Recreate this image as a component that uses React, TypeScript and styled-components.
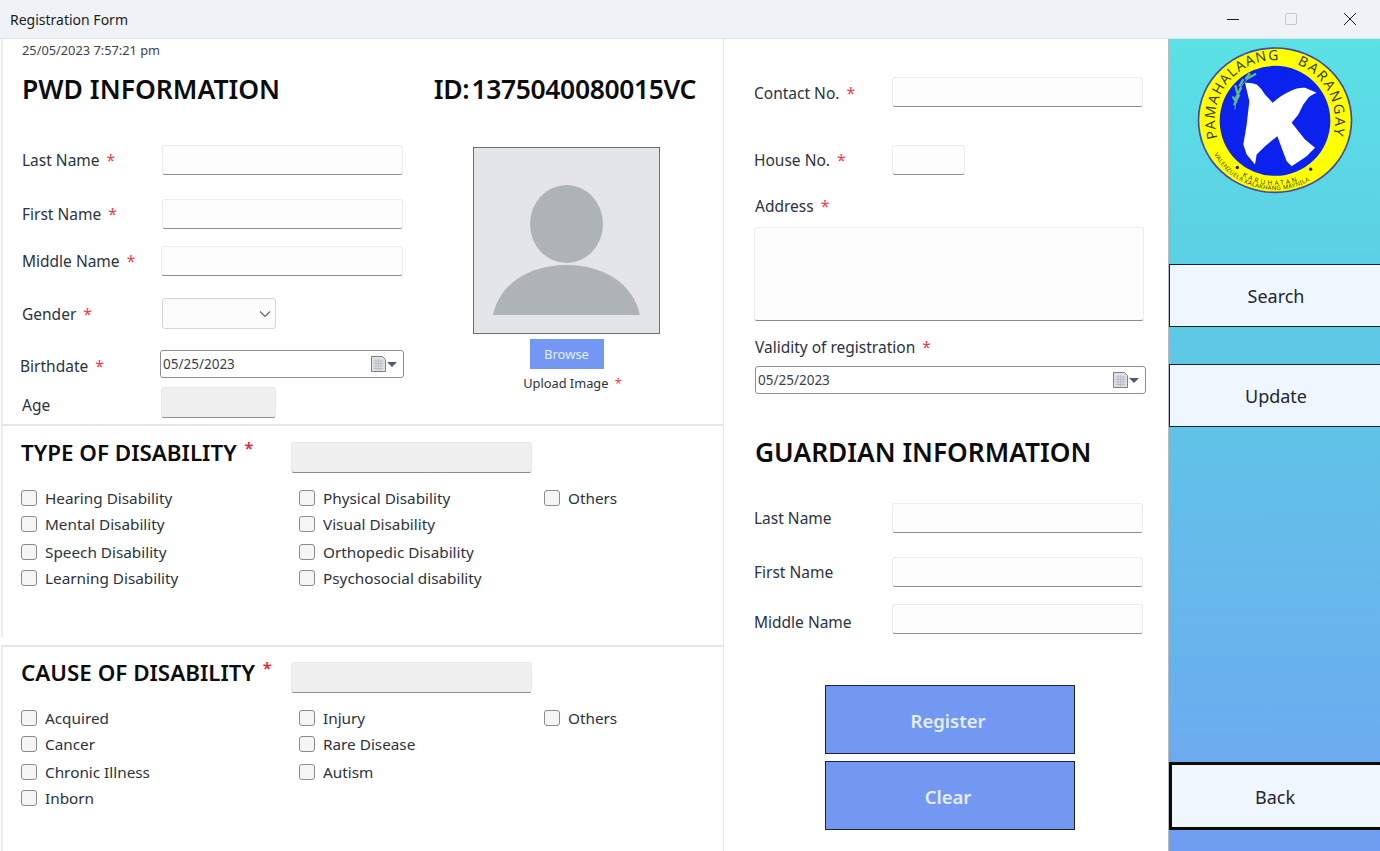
import React from 'react';
import styled, { createGlobalStyle } from 'styled-components';

const GlobalStyle = createGlobalStyle`
  html, body {
    margin: 0;
    padding: 0;
    background: #ffffff;
  }
  body {
    font-family: 'Noto Sans', 'Open Sans', sans-serif;
    color: #2a2f38;
    overflow: hidden;
  }
  * {
    box-sizing: border-box;
  }
`;

const typeOptions = [
  ['Hearing Disability', 'Mental Disability', 'Speech Disability', 'Learning Disability'],
  ['Physical Disability', 'Visual Disability', 'Orthopedic Disability', 'Psychosocial disability'],
  ['Others'],
];

const causeOptions = [
  ['Acquired', 'Cancer', 'Chronic Illness', 'Inborn'],
  ['Injury', 'Rare Disease', 'Autism'],
  ['Others'],
];

const CalendarIcon = () => (
  <CalendarSvg width="28" height="18" viewBox="0 0 28 18">
    <path d="M1.500 1.500h11l3 3v12h-14z" fill="#dfe1e6" stroke="#7f8086" />
    <path d="M3.500 6h10M3.500 8.500h10M3.500 11h10M3.500 13.500h10M6 4.500v11M8.500 4.500v11M11 4.500v11" stroke="#b3b8c4" strokeWidth="0.8" />
    <path d="M17 7h10l-5 5z" fill="#4e5c7d" />
  </CalendarSvg>
);

const Logo = () => (
  <svg width="160" height="152" viewBox="105 135 480 455">
    <defs>
      <path id="arcTop" d="M173 416 A180 180 0 1 1 517 416" />
      <path id="arcKaru" d="M232 522 A194 194 0 0 0 458 522" />
      <path id="arcValen" d="M160 462 A210 210 0 0 0 510 492" />
    </defs>
    <ellipse cx="345" cy="363" rx="232" ry="219" fill="#3f4aa8" />
    <ellipse cx="345" cy="363" rx="227" ry="214" fill="#ffff00" />
    <ellipse cx="345" cy="365" rx="166" ry="165" fill="#0b22ee" />
    <path
      d="M255 251 Q275 250 290 256 Q305 268 315 286 L338 311 Q362 288 390 276 Q415 264 435 266 L470 281 Q452 288 445 296 L430 316 L415 346 L395 371 L435 421 L465 446 L440 471 L395 501 L380 486 L352 411 L315 441 L290 466 L285 496 L260 466 L250 436 L260 376 L268 306 Z"
      fill="#ffffff"
    />
    <path d="M225 331 Q226 280 252 250 Q268 234 285 226" fill="none" stroke="#5fb98a" strokeWidth="3" />
    <path
      d="M222 318 L238 286 M226 300 L244 264 M232 282 L226 258 M238 262 L250 240 M256 240 L270 222 M262 238 L288 224 M230 312 L218 292"
      fill="none"
      stroke="#5fb98a"
      strokeWidth="7"
    />
    <LogoText $size={42} $spacing={3.500}>
      <textPath href="#arcTop">PAMAHALAANG</textPath>
    </LogoText>
    <LogoText $size={42} $spacing={6}>
      <textPath href="#arcTop" startOffset="60%">BARANGAY</textPath>
    </LogoText>
    <LogoText $size={20} $spacing={7}>
      <textPath href="#arcKaru" startOffset="7%">KARUHATAN</textPath>
    </LogoText>
    <LogoText $size={18} $spacing={1}>
      <textPath href="#arcValen" startOffset="1%">VALENZUELA KALAKHANG MAYNILA</textPath>
    </LogoText>
    <circle cx="232" cy="505" r="5" fill="#222222" />
    <circle cx="452" cy="510" r="5" fill="#222222" />
  </svg>
);

const OptionGrid = ({ columns }: { columns: string[][] }) => (
  <Options>
    {columns.map((items, col) => (
      <OptionColumn key={col}>
        {items.map((item) => (
          <OptionRow key={item}>
            <Checkbox type="checkbox" />
            <span>{item}</span>
          </OptionRow>
        ))}
      </OptionColumn>
    ))}
  </Options>
);

export default function App() {
  return (
    <>
      <GlobalStyle />
      <Window>
        <TitleBar>
          <WindowTitle>Registration Form</WindowTitle>
          <WindowControls>
            <WindowControl>
              <svg width="14" height="14" viewBox="0 0 14 14">
                <path d="M1 7.500h12" stroke="#1a1a1a" strokeWidth="1" />
              </svg>
            </WindowControl>
            <WindowControl>
              <svg width="14" height="14" viewBox="0 0 14 14">
                <rect x="1.500" y="1.500" width="11" height="11" rx="1.500" fill="none" stroke="#c4c6c9" />
              </svg>
            </WindowControl>
            <WindowControl>
              <svg width="14" height="14" viewBox="0 0 14 14">
                <path d="M1 1l12 12M13 1L1 13" stroke="#1a1a1a" strokeWidth="1" />
              </svg>
            </WindowControl>
          </WindowControls>
        </TitleBar>

        <Body>
          <LeftPanel>
            <InfoSection>
              <Timestamp>25/05/2023 7:57:21 pm</Timestamp>
              <HeaderRow>
                <Heading>PWD INFORMATION</Heading>
                <IdHeading>ID: 1375040080015VC</IdHeading>
              </HeaderRow>
              <InfoColumns>
                <FieldColumn>
                  <FieldRow $top={0}>
                    <FieldLabel>Last Name <Req>*</Req></FieldLabel>
                    <TextBox />
                  </FieldRow>
                  <FieldRow $top={24}>
                    <FieldLabel>First Name <Req>*</Req></FieldLabel>
                    <TextBox />
                  </FieldRow>
                  <FieldRow $top={17} $inputShift={-1}>
                    <FieldLabel>Middle Name <Req>*</Req></FieldLabel>
                    <TextBox $width={242} />
                  </FieldRow>
                  <FieldRow $top={22}>
                    <FieldLabel>Gender <Req>*</Req></FieldLabel>
                    <SelectBox>
                      <svg width="12" height="8" viewBox="0 0 12 8">
                        <path d="M1 1.500l5 5 5-5" fill="none" stroke="#60646a" strokeWidth="1.200" />
                      </svg>
                    </SelectBox>
                  </FieldRow>
                  <FieldRow $top={21} $rowShift={-2}>
                    <FieldLabel $drop={4}>Birthdate <Req>*</Req></FieldLabel>
                    <DateBox $width={244}>
                      05/25/2023
                      <CalendarIcon />
                    </DateBox>
                  </FieldRow>
                  <FieldRow $top={9} $inputShift={-1}>
                    <FieldLabel $drop={5}>Age</FieldLabel>
                    <ReadOnlyBox $width={115} />
                  </FieldRow>
                </FieldColumn>
                <PhotoColumn>
                  <PhotoFrame>
                    <svg width="185" height="185" viewBox="0 0 185 185">
                      <ellipse cx="92.500" cy="76" rx="36.500" ry="39" fill="#aeb3b7" />
                      <path d="M19 167 C26 135 56 117 92.500 117 C129 117 159 135 166 167 Z" fill="#aeb3b7" />
                    </svg>
                  </PhotoFrame>
                  <BrowseButton>Browse</BrowseButton>
                  <UploadLabel>Upload Image <Req>*</Req></UploadLabel>
                </PhotoColumn>
              </InfoColumns>
            </InfoSection>

            <DisabilitySection $height={213} $pad={16} $after={8}>
              <SectionHeader>
                <SectionTitle>TYPE OF DISABILITY <TitleReq>*</TitleReq></SectionTitle>
                <ReadOnlyBox $width={241} />
              </SectionHeader>
              <OptionGrid columns={typeOptions} />
            </DisabilitySection>

            <DisabilitySection $height={206} $pad={15}>
              <SectionHeader>
                <SectionTitle>CAUSE OF DISABILITY <TitleReq>*</TitleReq></SectionTitle>
                <ReadOnlyBox $width={241} />
              </SectionHeader>
              <OptionGrid columns={causeOptions} />
            </DisabilitySection>
          </LeftPanel>

          <MiddlePanel>
            <InlineField $top={0}>
              <MiddleLabel $drop={2}>Contact No. <Req>*</Req></MiddleLabel>
              <TextBox $width={251} />
            </InlineField>
            <InlineField $top={38}>
              <MiddleLabel>House No. <Req>*</Req></MiddleLabel>
              <TextBox $width={73} />
            </InlineField>
            <StackLabel $top={20}>Address <Req>*</Req></StackLabel>
            <AddressBox />
            <StackLabel $top={15}>Validity of registration <Req>*</Req></StackLabel>
            <MiddleDateBox $width={391} $top={8}>
              05/25/2023
              <CalendarIcon />
            </MiddleDateBox>
            <GuardianHeading>GUARDIAN INFORMATION</GuardianHeading>
            <InlineField $top={32}>
              <MiddleLabel>Last Name</MiddleLabel>
              <TextBox $width={251} />
            </InlineField>
            <InlineField $top={24}>
              <MiddleLabel>First Name</MiddleLabel>
              <TextBox $width={251} />
            </InlineField>
            <InlineField $top={17}>
              <MiddleLabel $drop={6}>Middle Name</MiddleLabel>
              <TextBox $width={251} />
            </InlineField>
            <ActionStack>
              <ActionButton>Register</ActionButton>
              <ActionButton>Clear</ActionButton>
            </ActionStack>
          </MiddlePanel>

          <Sidebar>
            <LogoWrap>
              <Logo />
            </LogoWrap>
            <SideButton $top={70}>Search</SideButton>
            <SideButton $top={37}>Update</SideButton>
            <BackButton>Back</BackButton>
          </Sidebar>
        </Body>
      </Window>
    </>
  );
}

// Styled Components
const Window = styled.div`
  width: 1380px;
  height: 851px;
  display: flex;
  flex-direction: column;
  overflow: hidden;
  background: #ffffff;
`;

const TitleBar = styled.div`
  height: 39px;
  flex-shrink: 0;
  display: flex;
  align-items: center;
  justify-content: space-between;
  padding-left: 10px;
  background: #eff3f8;
  border-bottom: 1px solid #e2e4e6;
`;

const WindowTitle = styled.div`
  font-size: 14px;
  color: #1c1c1c;
`;

const WindowControls = styled.div`
  display: flex;
  padding-right: 1px;
`;

const WindowControl = styled.div`
  width: 58.500px;
  height: 38px;
  display: flex;
  align-items: center;
  justify-content: center;
`;

const Body = styled.div`
  flex: 1;
  display: flex;
  min-height: 0;
`;

const LeftPanel = styled.div`
  width: 724px;
  flex-shrink: 0;
  display: flex;
  flex-direction: column;
  border-right: 1px solid #e4e4e4;
`;

const InfoSection = styled.div`
  height: 385px;
  margin-left: 1px;
  padding-left: 19px;
  flex-shrink: 0;
  border-left: 2px solid #ececec;
`;

const Timestamp = styled.div`
  font-size: 12.800px;
  line-height: 17px;
  padding-top: 3px;
  height: 20px;
  color: #3d4350;
`;

const HeaderRow = styled.div`
  display: flex;
  justify-content: space-between;
  align-items: center;
  height: 60px;
  padding-right: 27px;
`;

const Heading = styled.h1`
  margin: 0;
  font-size: 26.500px;
  font-weight: 600;
  color: #0c0c0e;
`;

const IdHeading = styled(Heading)`
  letter-spacing: -0.400px;
  word-spacing: -4px;
`;

const InfoColumns = styled.div`
  display: flex;
  padding-top: 26px;
`;

const FieldColumn = styled.div`
  width: 451px;
  flex-shrink: 0;
`;

const FieldRow = styled.div<{ $top: number; $inputShift?: number; $rowShift?: number }>`
  display: flex;
  align-items: center;
  margin-top: ${(p) => p.$top}px;
  margin-left: ${(p) => p.$rowShift ?? 0}px;
  & > :last-child {
    margin-left: ${(p) => p.$inputShift ?? 0}px;
  }
`;

const FieldLabel = styled.div<{ $drop?: number }>`
  width: 140px;
  flex-shrink: 0;
  padding-top: ${(p) => p.$drop ?? 0}px;
  font-size: 15.500px;
  color: #2c3240;
`;

const Req = styled.span`
  color: #f5374a;
  margin-left: 3px;
`;

const TitleReq = styled.span`
  color: #f01a2c;
  font-size: 16px;
  vertical-align: 7px;
  margin-left: 2px;
`;

const TextBox = styled.div<{ $width?: number }>`
  width: ${(p) => p.$width ?? 241}px;
  height: 30px;
  flex-shrink: 0;
  background: #fdfdfd;
  border: 1px solid #ececec;
  border-bottom: 1px solid #8e8e8e;
  border-radius: 3px;
`;

const SelectBox = styled.div`
  width: 114px;
  height: 31px;
  display: flex;
  align-items: center;
  justify-content: flex-end;
  padding-right: 4px;
  background: #fcfcfc;
  border: 1px solid #d6d6d6;
  border-radius: 3px;
`;

const DateBox = styled.div<{ $width: number; $top?: number }>`
  width: ${(p) => p.$width}px;
  height: 28px;
  margin-top: ${(p) => p.$top ?? 0}px;
  display: flex;
  align-items: center;
  justify-content: space-between;
  padding: 0 5px 0 2px;
  font-size: 13.500px;
  color: #3a3f4a;
  background: #ffffff;
  border: 1px solid #8f8f8f;
  border-radius: 3px;
`;

const MiddleDateBox = styled(DateBox)`
  margin-left: 1px;
`;

const CalendarSvg = styled.svg`
  flex-shrink: 0;
`;

const ReadOnlyBox = styled.div<{ $width: number }>`
  width: ${(p) => p.$width}px;
  height: 31px;
  background: #f0f0f0;
  border: 1px solid #e8e8e8;
  border-bottom: 1px solid #8e8e8e;
  border-radius: 3px;
`;

const PhotoColumn = styled.div`
  width: 187px;
  display: flex;
  flex-direction: column;
  align-items: center;
  padding-top: 2px;
`;

const PhotoFrame = styled.div`
  width: 187px;
  height: 187px;
  display: flex;
  background: #e3e5e8;
  border: 1px solid #6e6e6e;
`;

const BrowseButton = styled.div`
  width: 74px;
  height: 30px;
  margin-top: 5px;
  display: flex;
  align-items: center;
  justify-content: center;
  font-size: 13px;
  color: #e8efff;
  background: #7298f3;
`;

const UploadLabel = styled.div`
  margin-top: 5px;
  padding-left: 12px;
  font-size: 12.800px;
  white-space: nowrap;
  color: #2c3240;
`;

const DisabilitySection = styled.div<{ $height: number; $pad: number; $after?: number }>`
  height: ${(p) => p.$height}px;
  flex-shrink: 0;
  margin: 0 0 ${(p) => p.$after ?? 0}px 1px;
  padding: ${(p) => p.$pad}px 0 0 18px;
  border-top: 2px solid #e6e6e6;
  border-left: 2px solid #ececec;
`;

const SectionHeader = styled.div`
  display: flex;
  align-items: center;
  height: 31px;
`;

const SectionTitle = styled.h2`
  margin: 0 0 14px;
  width: 270px;
  flex-shrink: 0;
  font-size: 22.400px;
  font-weight: 600;
  line-height: 22px;
  white-space: nowrap;
  color: #0c0c0e;
`;

const Options = styled.div`
  display: grid;
  grid-template-columns: 278px 245px auto;
  margin-top: 12px;
`;

const OptionColumn = styled.div`
  display: grid;
  grid-template-rows: 26px 26px 28px 26px;
  align-items: end;
`;

const OptionRow = styled.label`
  display: flex;
  align-items: center;
  gap: 8px;
  height: 26px;
  font-size: 15.300px;
  color: #2c3240;
`;

const Checkbox = styled.input`
  appearance: none;
  width: 16px;
  height: 16px;
  margin: 0;
  flex-shrink: 0;
  background: #f5f5f5;
  border: 1px solid #8a8a8a;
  border-radius: 3px;
`;

const MiddlePanel = styled.div`
  width: 445px;
  flex-shrink: 0;
  display: flex;
  flex-direction: column;
  padding: 38px 0 0 30px;
  border-right: 1px solid #b8babd;
`;

const InlineField = styled.div<{ $top: number }>`
  display: flex;
  align-items: center;
  margin-top: ${(p) => p.$top}px;
`;

const MiddleLabel = styled.div<{ $drop?: number }>`
  width: 138px;
  flex-shrink: 0;
  padding-top: ${(p) => p.$drop ?? 0}px;
  font-size: 15.500px;
  color: #2c3240;
`;

const StackLabel = styled.div<{ $top: number }>`
  margin-top: ${(p) => p.$top}px;
  padding-left: 1px;
  font-size: 15.500px;
  line-height: 22px;
  color: #2c3240;
`;

const AddressBox = styled.div`
  width: 390px;
  height: 94px;
  margin-top: 10px;
  background: #fdfdfd;
  border: 1px solid #ececec;
  border-bottom: 1px solid #8e8e8e;
  border-radius: 3px;
`;

const GuardianHeading = styled.h2`
  margin: 40px 0 0 1px;
  font-size: 26.300px;
  line-height: 37px;
  font-weight: 600;
  white-space: nowrap;
  color: #0c0c0e;
`;

const ActionStack = styled.div`
  display: flex;
  flex-direction: column;
  gap: 7px;
  margin: 51px 0 0 71px;
`;

const ActionButton = styled.div`
  width: 250px;
  height: 69px;
  display: flex;
  align-items: center;
  justify-content: center;
  padding: 2px 4px 0 0;
  font-size: 18.500px;
  font-weight: 600;
  color: #e6eeff;
  background: #7298f1;
  border: 1px solid #1d2233;
`;

const Sidebar = styled.div`
  flex: 1;
  display: flex;
  flex-direction: column;
  background: linear-gradient(180deg, #5be1e6 0%, #5ccde4 30%, #6aaeee 85%, #6f9df0 100%);
`;

const LogoWrap = styled.div`
  display: flex;
  justify-content: center;
  height: 155px;
  padding: 5px 0 0 1px;
`;

const LogoText = styled.text<{ $size: number; $spacing: number }>`
  font-size: ${(p) => p.$size}px;
  letter-spacing: ${(p) => p.$spacing}px;
  fill: #3a3a2a;
  font-family: 'Noto Sans', sans-serif;
`;

const SideButton = styled.div<{ $top: number }>`
  height: 63px;
  margin-top: ${(p) => p.$top}px;
  display: flex;
  align-items: center;
  justify-content: center;
  padding-left: 2px;
  font-size: 18px;
  color: #22262e;
  background: #eff6fd;
  border: 1px solid #1f242c;
  border-right: none;
`;

const BackButton = styled(SideButton).attrs({ $top: 0 })`
  height: 68px;
  margin-top: auto;
  margin-bottom: 21px;
  padding: 2px 2px 0 0;
  border: 3px solid #0a0a0a;
  border-right: none;
`;
